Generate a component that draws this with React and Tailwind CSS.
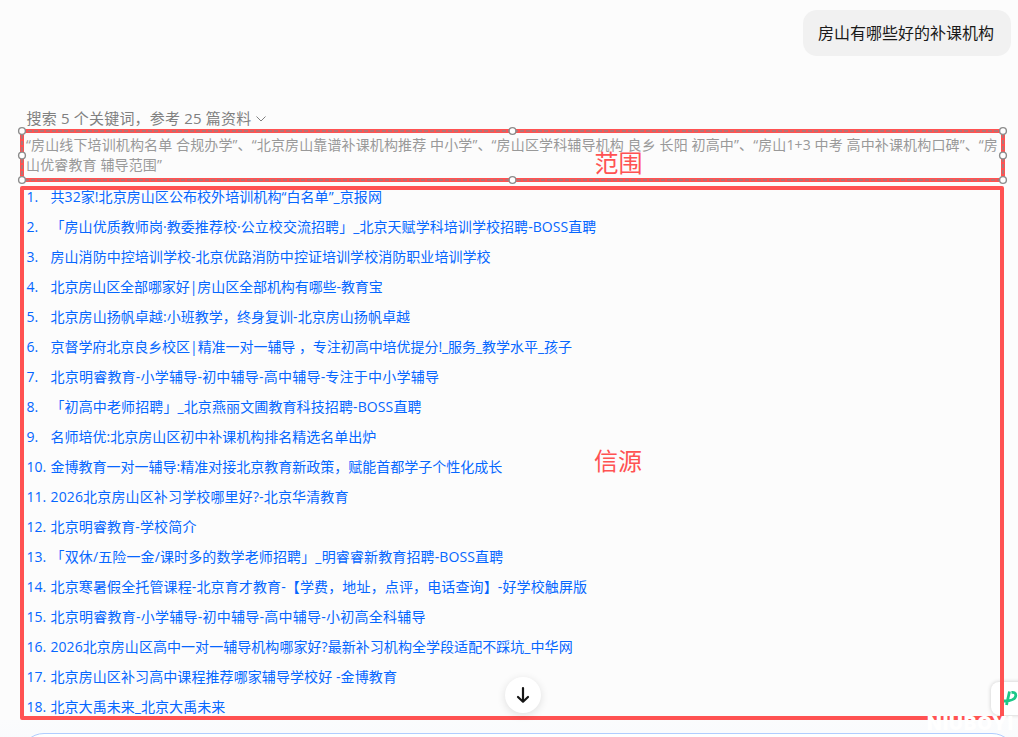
import React from 'react'

const sources = [
  { title: '共32家!北京房山区公布校外培训机构“白名单”_京报网', spacing: 'tracking-[0.07px]' },
  { title: '「房山优质教师岗·教委推荐校·公立校交流招聘」_北京天赋学科培训学校招聘-BOSS直聘', spacing: 'tracking-[0.06px]' },
  { title: '房山消防中控培训学校-北京优路消防中控证培训学校消防职业培训学校', spacing: 'tracking-[0.05px]' },
  { title: '北京房山区全部哪家好|房山区全部机构有哪些-教育宝', spacing: 'tracking-[-0.08px]' },
  { title: '北京房山扬帆卓越:小班教学，终身复训-北京房山扬帆卓越', spacing: 'tracking-[0.05px]' },
  { title: '京督学府北京良乡校区|精准一对一辅导 ，专注初高中培优提分!_服务_教学水平_孩子', spacing: 'tracking-[-0.05px]' },
  { title: '北京明睿教育-小学辅导-初中辅导-高中辅导-专注于中小学辅导', spacing: 'tracking-[0.22px]' },
  { title: '「初高中老师招聘」_北京燕丽文圃教育科技招聘-BOSS直聘', spacing: 'tracking-[0.11px]' },
  { title: '名师培优:北京房山区初中补课机构排名精选名单出炉', spacing: 'tracking-normal' },
  { title: '金博教育一对一辅导:精准对接北京教育新政策，赋能首都学子个性化成长', spacing: 'tracking-normal' },
  { title: '2026北京房山区补习学校哪里好?-北京华清教育', spacing: 'tracking-[0.15px]' },
  { title: '北京明睿教育-学校简介', spacing: 'tracking-[0.14px]' },
  { title: '「双休/五险一金/课时多的数学老师招聘」_明睿睿新教育招聘-BOSS直聘', spacing: 'tracking-[0.13px]' },
  { title: '北京寒暑假全托管课程-北京育才教育-【学费，地址，点评，电话查询】-好学校触屏版', spacing: 'tracking-[0.13px]' },
  { title: '北京明睿教育-小学辅导-初中辅导-高中辅导-小初高全科辅导', spacing: 'tracking-[0.25px]' },
  { title: '2026北京房山区高中一对一辅导机构哪家好?最新补习机构全学段适配不踩坑_中华网', spacing: 'tracking-[0.05px]' },
  { title: '北京房山区补习高中课程推荐哪家辅导学校好 -金博教育', spacing: 'tracking-[0.09px]' },
  { title: '北京大禹未来_北京大禹未来', spacing: 'tracking-[0.05px]' },
]

// resize handles of the selected frame
const Handles = () => (
  <svg className="absolute -inset-2" width="1001" height="69" fill="none">
    <rect x="10" y="10" width="981" height="49" stroke="#a07f7f" strokeWidth="1.6" strokeDasharray="4 2" />
    {[[10, 10], [500.5, 10], [991, 10], [10, 34.5], [991, 34.5], [10, 59], [500.5, 59], [991, 59]].map(([cx, cy]) => (
      <circle key={`${cx}-${cy}`} cx={cx} cy={cy} r="3.4" fill="#fff" stroke="#8c8c8c" strokeWidth="1.4" />
    ))}
  </svg>
)

const App = () => {
  return (
    <div className='relative flex h-[737px] w-[1018px] flex-col overflow-hidden bg-[#fcfcfc] font-["Open_Sans","Noto_Sans_CJK_SC",sans-serif] whitespace-nowrap'>
      <div className="flex shrink-0 justify-end pt-2.5 pr-[7px] pb-[50px]">
        <div className="flex h-[46px] w-[208px] items-center rounded-[14px] bg-[#f1f1f1] pl-[15px] text-base text-[#1a1a1a]">
          房山有哪些好的补课机构
        </div>
      </div>

      <div className="-mb-px flex h-6 shrink-0 items-center gap-[5px] pl-[26.5px] text-[15px] text-[#808080]">
        <span className="tracking-[0.19px]">搜索 5 个关键词，参考 25 篇资料</span>
        <svg className="mt-0.5" width="10" height="6" viewBox="0 0 10 6" fill="none" stroke="#808080">
          <path d="M0.5 0.5 5 5 9.5 0.5" />
        </svg>
      </div>

      <div className="flex shrink-0 flex-col gap-1 pl-5">
        {/* keywords */}
        <div className="relative h-[53px] w-[985px] border-4 border-[#ff5252]">
          <div className="pt-0.5 pl-0.5 text-sm leading-5 tracking-[0.13px] text-[#999]">
            <p>“房山线下培训机构名单 合规办学”、“北京房山靠谱补课机构推荐 中小学”、“房山区学科辅导机构 良乡 长阳 初高中”、“房山1+3 中考 高中补课机构口碑”、“房</p>
            <p>山优睿教育 辅导范围”</p>
          </div>
          <div className="absolute -inset-1">
            <Handles />
          </div>
          <span className="absolute top-3 left-[570.5px] text-2xl leading-9 text-[#ff5252]">范围</span>
        </div>

        {/* sources */}
        <div className="relative z-10 h-[534px] w-[984px] rounded-[2px] border-4 border-[#ff5252]">
          <ol className="-mt-2 pl-[2.5px] text-sm text-[#0566ff]">
            {sources.map((item, i) => (
              <li key={item.title} className="flex h-[30px] items-center">
                <span className="w-6 shrink-0">{i + 1}.</span>
                <a className={item.spacing}>{item.title}</a>
              </li>
            ))}
          </ol>
          <span className="absolute top-[253px] left-[570px] text-2xl leading-9 text-[#ff5252]">信源</span>
        </div>
      </div>

      {/* input area, only its top edge is in view */}
      <div className="shrink-0 bg-linear-to-b from-[#fbfcfd] to-[#f5f8fd] pt-[13px] pl-5">
        <div className="h-[60px] w-[996px] rounded-3xl border border-[#b0cdff] bg-white" />
      </div>

      <button className="absolute top-[677px] left-[505px] z-20 flex size-9 items-center justify-center rounded-full bg-white shadow-[0_2px_8px_rgba(0,0,0,0.12)]">
        <svg width="14" height="18" viewBox="0 0 14 18" fill="none" stroke="#151515" strokeWidth="2.2" strokeLinecap="round" strokeLinejoin="round">
          <path d="M7 2V15.5M2 11 7 15.7 12 11" />
        </svg>
      </button>

      <div className="absolute top-[682px] -right-4 h-[33px] w-[43px] rounded-lg bg-white pt-2 pl-3 shadow-[0_0_4px_rgba(0,0,0,0.2)]">
        <svg width="16" height="16" viewBox="0 0 16 16" fill="none" stroke="#1cc888" strokeWidth="2.8" strokeLinejoin="round">
          <path d="M6.500 1.500 3.500 15M0.500 11C5 11 12.500 10.500 12.800 5.500C12.900 2.500 10.500 2.200 8.500 2.500" />
        </svg>
      </div>

      <span className='absolute right-1 bottom-0 z-20 font-["Inter"] text-[19px] leading-[26px] font-black tracking-[0.9px] text-white'>
        NIUBOYI
      </span>
    </div>
  )
}

export default App
